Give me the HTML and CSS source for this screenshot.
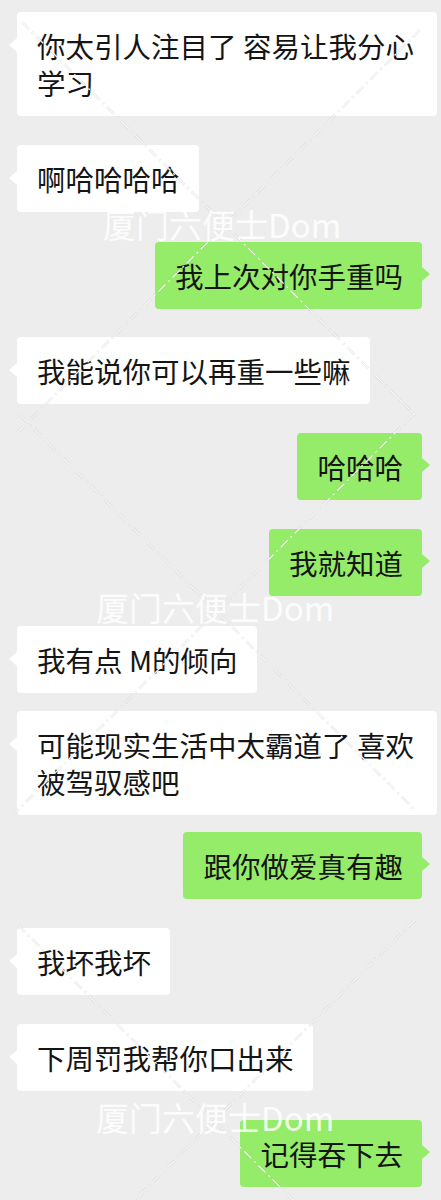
FILE: index.html
```html
<!DOCTYPE html>
<html lang="zh-CN">
<head>
<meta charset="utf-8">
<title>聊天记录</title>
<link rel="stylesheet" href="styles.css">
</head>
<body>
<div class="screen">
  <div class="chat">
    <div class="row in"><div class="bubble">你太引人注目了 容易让我分心学习</div></div>
    <div class="row in"><div class="bubble">啊哈哈哈哈</div></div>
    <div class="row out g30"><div class="bubble">我上次对你手重吗</div></div>
    <div class="row in g28"><div class="bubble">我能说你可以再重一些嘛</div></div>
    <div class="row out"><div class="bubble">哈哈哈</div></div>
    <div class="row out"><div class="bubble">我就知道</div></div>
    <div class="row in g30"><div class="bubble">我有点 M的倾向</div></div>
    <div class="row in g18"><div class="bubble">可能现实生活中太霸道了 喜欢被驾驭感吧</div></div>
    <div class="row out g17"><div class="bubble">跟你做爱真有趣</div></div>
    <div class="row in"><div class="bubble">我坏我坏</div></div>
    <div class="row in"><div class="bubble">下周罚我帮你口出来</div></div>
    <div class="row out"><div class="bubble">记得吞下去</div></div>
  </div>

  <svg class="wm-lines" width="441" height="1200" viewBox="0 0 441 1200" aria-hidden="true">
    <g class="shade">
      <line x1="22" y1="22" x2="415" y2="415"/>
      <line x1="420" y1="30" x2="18" y2="432"/>
      <line x1="20" y1="415" x2="415" y2="810"/>
      <line x1="415" y1="413" x2="15" y2="813"/>
      <line x1="18" y1="925" x2="293" y2="1200"/>
      <line x1="415" y1="920" x2="135" y2="1200"/>
    </g>
    <g class="dash">
      <line x1="22" y1="22" x2="415" y2="415"/>
      <line x1="420" y1="30" x2="18" y2="432"/>
      <line x1="20" y1="415" x2="415" y2="810"/>
      <line x1="415" y1="413" x2="15" y2="813"/>
      <line x1="18" y1="925" x2="293" y2="1200"/>
      <line x1="415" y1="920" x2="135" y2="1200"/>
    </g>
  </svg>
  <div class="wm wm-1">厦门六便士Dom</div>
  <div class="wm wm-2">厦门六便士Dom</div>
  <div class="wm wm-3">厦门六便士Dom</div>
</div>
</body>
</html>
```

FILE: styles.css
```css
* {
  box-sizing: border-box;
}

html, body {
  margin: 0;
  padding: 0;
  background: #ededed;
}

body {
  font-family: "Noto Sans CJK SC", "Noto Sans", sans-serif;
  color: #151515;
}

.screen {
  position: relative;
  width: 441px;
  height: 1200px;
  overflow: hidden;
  background: #ededed;
}

.chat {
  display: flex;
  flex-direction: column;
  gap: 29px;
  padding-top: 12px;
}

.row {
  display: flex;
}

.row.in {
  justify-content: flex-start;
  padding-left: 17px;
  padding-right: 4px;
}

.row.out {
  justify-content: flex-end;
  padding-right: 19px;
  padding-left: 60px;
}

.g30 { margin-top: 1px; }
.g28 { margin-top: -1px; }
.g18 { margin-top: -11px; }
.g17 { margin-top: -12px; }

.bubble {
  position: relative;
  max-width: 100%;
  padding: 15px 19px 15px 20px;
  font-size: 28.5px;
  line-height: 37px;
  border-radius: 4px;
  background: #ffffff;
}

.out .bubble {
  background: #95ec69;
}

.in .bubble::before {
  content: "";
  position: absolute;
  left: -8px;
  top: 26px;
  border-top: 7px solid transparent;
  border-bottom: 7px solid transparent;
  border-right: 8px solid #ffffff;
}

.out .bubble::after {
  content: "";
  position: absolute;
  right: -8px;
  top: 25px;
  border-top: 7px solid transparent;
  border-bottom: 7px solid transparent;
  border-left: 8px solid #95ec69;
}

.wm-lines {
  position: absolute;
  left: 0;
  top: 0;
  pointer-events: none;
}

.wm-lines .shade line {
  stroke: rgba(150, 150, 150, 0.28);
  stroke-width: 2.4;
  stroke-dasharray: 10 4 2 4;
}

.wm-lines .dash line {
  stroke: rgba(255, 255, 255, 0.9);
  stroke-width: 1.3;
  stroke-dasharray: 10 4 2 4;
}

.wm {
  position: absolute;
  font-family: "Noto Sans CJK SC", "Noto Sans", sans-serif;
  font-size: 33px;
  line-height: 1;
  color: rgba(255, 255, 255, 0.85);
  white-space: nowrap;
  pointer-events: none;
}

.wm-1 { left: 103px; top: 208px; }
.wm-2 { left: 96px; top: 591px; }
.wm-3 { left: 96px; top: 1101px; }
```
